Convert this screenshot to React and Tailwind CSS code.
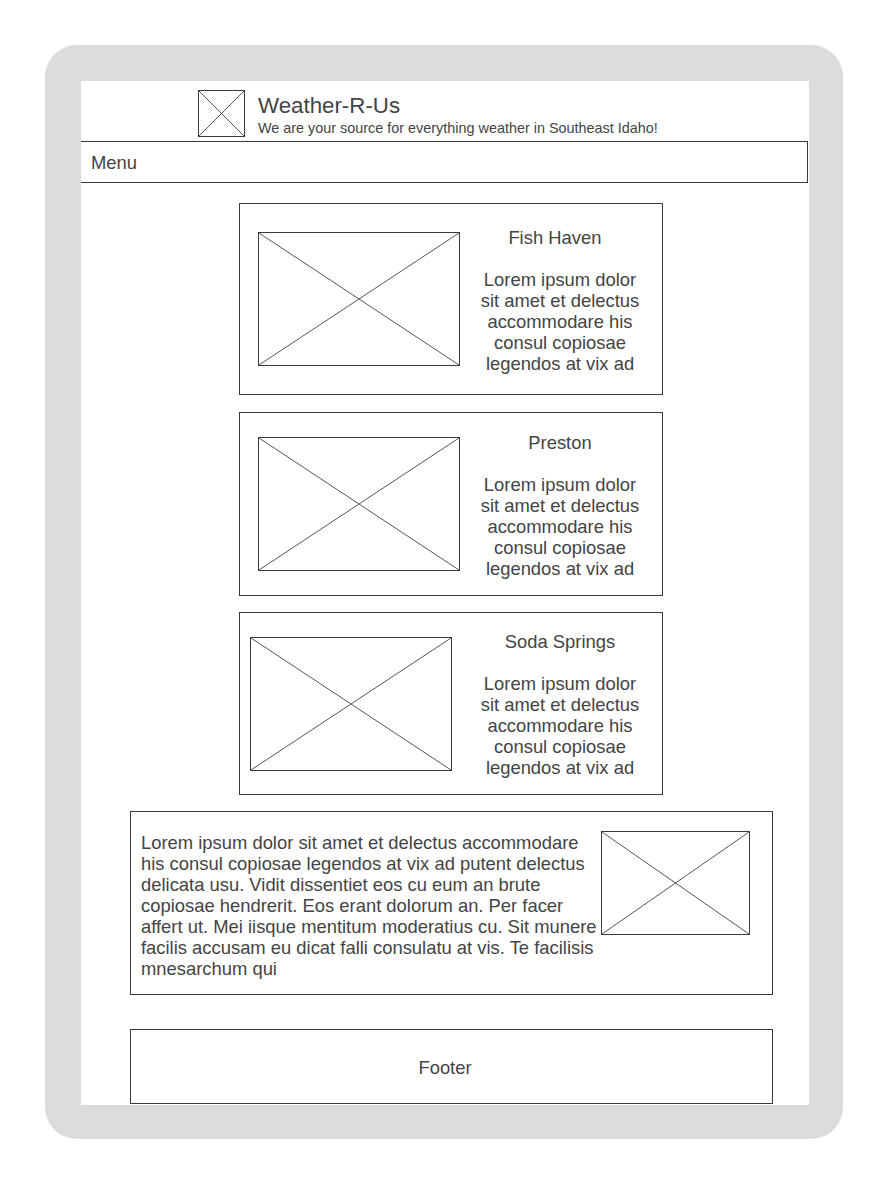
import React from "react";

const lorem =
  "Lorem ipsum dolor sit amet et delectus accommodare his consul copiosae legendos at vix ad";

const longLorem =
  "Lorem ipsum dolor sit amet et delectus accommodare his consul copiosae legendos at vix ad putent delectus delicata usu. Vidit dissentiet eos cu eum an brute copiosae hendrerit. Eos erant dolorum an. Per facer affert ut. Mei iisque mentitum moderatius cu. Sit munere facilis accusam eu dicat falli consulatu at vis. Te facilisis mnesarchum qui";

function Placeholder({ className = "" }) {
  return (
    <div className={`relative shrink-0 border border-[#3a3a3a] bg-white ${className}`}>
      <svg
        className="absolute inset-0 h-full w-full"
        viewBox="0 0 100 100"
        preserveAspectRatio="none"
      >
        <line x1="0" y1="0" x2="100" y2="100" stroke="#555" strokeWidth="1" vectorEffect="non-scaling-stroke" />
        <line x1="100" y1="0" x2="0" y2="100" stroke="#555" strokeWidth="1" vectorEffect="non-scaling-stroke" />
      </svg>
    </div>
  );
}

function TownCard({ name, className, imgPad, textBox }) {
  return (
    <div className={`flex items-center border border-[#3a3a3a] ${className}`}>
      <div className={imgPad}>
        <Placeholder className="h-[134px] w-[202px]" />
      </div>
      <div className={`w-[170px] text-center text-[18.4px] leading-[21px] ${textBox}`}>
        <p>{name}</p>
        <p className="h-[21px]"></p>
        <p>{lorem}</p>
      </div>
    </div>
  );
}

export default function App() {
  return (
    <div
      className="h-[1184px] w-[888px] bg-white pl-[45px] pt-[45px] text-[#444]"
      style={{ fontFamily: '"Liberation Sans", Arial, sans-serif' }}
    >
      <div className="h-[1094px] w-[798px] rounded-[32px] bg-[#dcdcdc] pl-[36px] pt-[36px]">
        <div className="flex h-[1024px] w-[728px] flex-col overflow-hidden bg-white">
          {/* Header */}
          <div className="flex h-[60px] items-start pl-[117px] pt-[9px]">
            <Placeholder className="h-[47px] w-[47px]" />
            <div className="ml-[13px] mt-[3px]">
              <h1 className="text-[22.3px] leading-[26px]">Weather-R-Us</h1>
              <p className="text-[14.4px] leading-[18px]">
                We are your source for everything weather in Southeast Idaho!
              </p>
            </div>
          </div>

          {/* Menu */}
          <div className="-ml-px flex h-[42px] w-[728px] items-center border border-[#3a3a3a] pl-[10px] pt-[2px] text-[18.4px]">
            Menu
          </div>

          {/* Main */}
          <div className="flex flex-col pt-[20px]">
            <TownCard
              name={"Fish Haven\u00a0\u00a0"}
              className="ml-[158px] w-[424px]"
              imgPad="pl-[18px]"
              textBox="ml-[15px] pb-[20px] pt-[23px]"
            />
            <TownCard
              name="Preston"
              className="ml-[158px] mt-[17px] w-[424px]"
              imgPad="pl-[18px]"
              textBox="ml-[15px] pb-[16px] pt-[19px]"
            />
            <TownCard
              name="Soda Springs"
              className="ml-[158px] mt-[16px] w-[424px]"
              imgPad="pl-[10px]"
              textBox="ml-[23px] pb-[16px] pt-[18px]"
            />

            <div className="ml-[49px] mt-[16px] flex w-[643px] items-start border border-[#3a3a3a] pb-[15px] pl-[10px] pt-[20px]">
              <p className="h-[147px] w-[460px] overflow-hidden text-[18.4px] leading-[21px]">
                {longLorem}
              </p>
              <Placeholder className="-mt-px h-[104px] w-[149px]" />
            </div>

            {/* Footer */}
            <div className="ml-[49px] mt-[34px] flex h-[75px] w-[643px] items-center justify-center border border-[#3a3a3a] pr-[13px] pt-[2px] text-[18.4px]">
              Footer
            </div>
          </div>
        </div>
      </div>
    </div>
  );
}
